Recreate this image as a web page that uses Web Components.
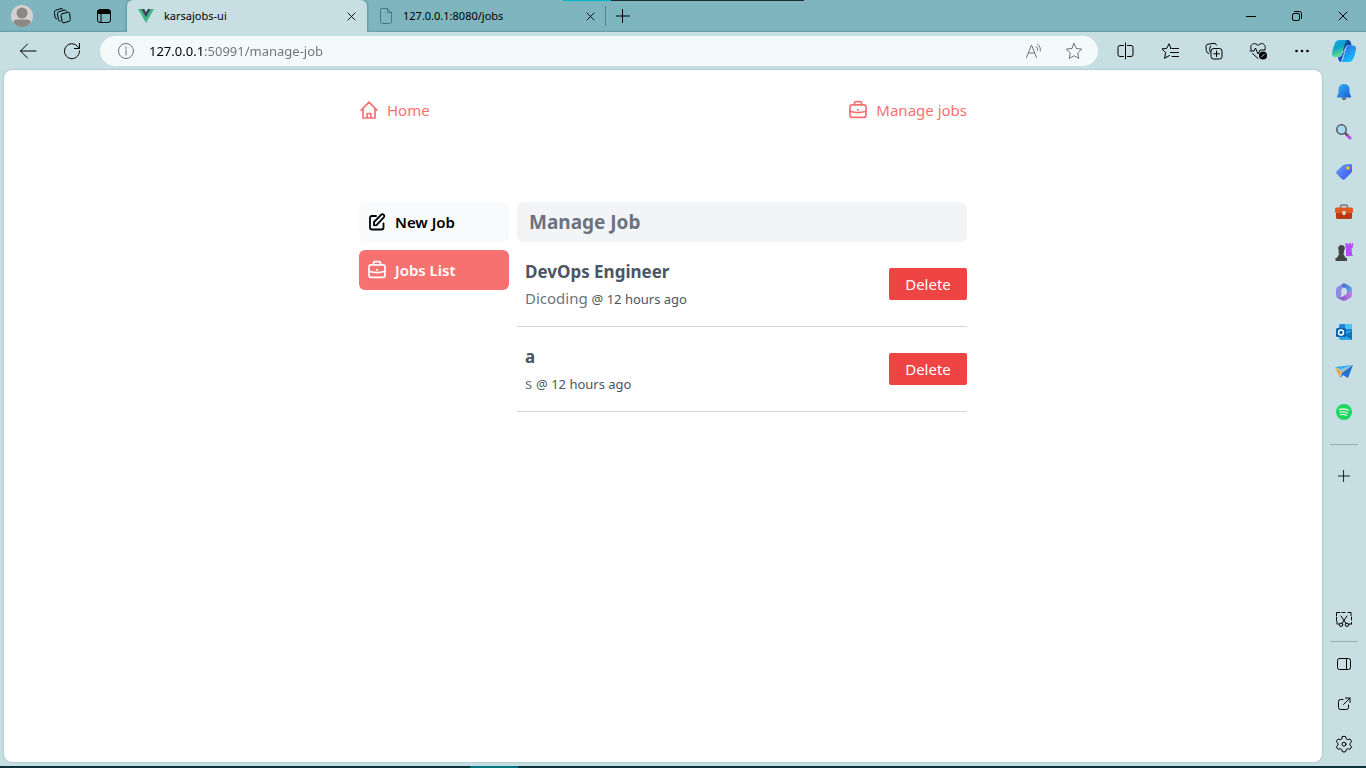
<!DOCTYPE html>
<html lang="en">
<head>
<meta charset="utf-8">
<title>karsajobs-ui</title>
<style>
html, body { margin: 0; height: 100%; }
body { font-family: "Noto Sans", "Open Sans", sans-serif; font-size: 15px; line-height: 24px; color: #000; }
</style>
</head>
<body>
<browser-window>
  <tab-strip slot="tabs">
    <browser-tab icon="vue" active>karsajobs-ui</browser-tab>
    <browser-tab icon="page">127.0.0.1:8080/jobs</browser-tab>
  </tab-strip>
  <tool-bar slot="toolbar" url="127.0.0.1:50991/manage-job"></tool-bar>
  <side-bar slot="sidebar"></side-bar>
  <jobs-page>
    <nav-link slot="nav" icon="home" href="#home">Home</nav-link>
    <nav-link slot="nav" icon="briefcase" href="#manage">Manage jobs</nav-link>
    <menu-link slot="menu" icon="edit" href="#new">New Job</menu-link>
    <menu-link slot="menu" icon="briefcase" href="#list" active>Jobs List</menu-link>
    <span slot="title">Manage Job</span>
    <job-item>DevOps Engineer<span slot="company">Dicoding</span><span slot="time">@ 12 hours ago</span></job-item>
    <job-item>a<span slot="company">s</span><span slot="time">@ 12 hours ago</span></job-item>
  </jobs-page>
</browser-window>

<script>
const define = (name, html, setup) => {
  const template = document.createElement('template');
  template.innerHTML = html;
  customElements.define(name, class extends HTMLElement {
    constructor() {
      super();
      this.attachShadow({ mode: 'open' }).append(template.content.cloneNode(true));
    }
    connectedCallback() { if (setup) setup(this, this.shadowRoot); }
  });
};

/* Each entry: view box size, then the drawing. Line icons use the text colour. */
const icons = {
  profile: [24, '<circle cx="12" cy="12" r="11" fill="#d5d1ce" stroke="none"/><circle cx="12" cy="9" r="5.5" fill="#8c8886" stroke="none"/><path d="M3.500 18.500q0-3 3-3h11q3 0 3 3Q17 23 12 23t-8.500-4.500z" fill="#8c8886" stroke="none"/>'],
  workspaces: [18, '<path d="m9.500 6.600 5.500-1.300q1.500-.2 1.700 1.200l.6 6q0 1.500-1.300 1.900l-5 1.400q-1.600.3-1.900-1.300L8 8.500q0-1.500 1.500-1.900z"/><path d="M7 14.200q-1.300.1-1.600-1.500L4.500 7q-.1-1.900 1.400-2.300l5.600-1.500q1.400-.3 2 .9M3.500 12q-1-.1-1.300-1.500L1.400 5.500q-.1-1.900 1.300-2.300L8 1.600q1.300-.3 2 .8"/>'],
  tabactions: [16, '<rect x="1.500" y="1.500" width="13" height="13" rx="2.500"/><path d="M2 3.500h12M5 5v9" /><path d="M2 2.500h12v3H2z" fill="currentColor"/>'],
  vue: [16, '<path d="M0 1h3.200L8 9.500 12.800 1H16L8 15z" fill="#41b883" stroke="none"/><path d="M3.200 1h3L8 4.200 9.800 1h3L8 9.500z" fill="#35495e" stroke="none"/>'],
  page: [18, '<path d="M4.500 1.500h6l4 4v9q0 2-2 2h-7q-2 0-2-2v-12q0-1 1-1zM10.500 1.500v4h4"/>'],
  close: [10, '<path d="m1 1 8 8M9 1 1 9" />'],
  plus: [14, '<path d="M6.500.5v13M0 7h13.500"/>'],
  minimize: [10, '<path d="M0 5.500h10"/>'],
  restore: [10, '<rect x=".5" y="2.500" width="7" height="7" rx="1.500"/><path d="M2.500.5h5q2 0 2 2v5"/>'],
  back: [18, '<path d="M17 9H1.500M8.500 2l-7 7 7 7"/>'],
  reload: [18, '<path d="M16 6.500A7.500 7.500 0 1 0 16.500 9M16.500 1.500v5h-5"/>'],
  info: [18, '<circle cx="9" cy="9" r="7.500"/><path d="M9 8v5M9 5v1.500"/>'],
  read: [18, '<path d="M1.500 15.500 6.500 3l5 12.500M3.500 11h6M11.500 4.500q1.500 1.500 1 4M12.500 2q3.500 2.500 2.700 7"/>'],
  star: [18, '<path d="m9 1.500 2.300 5 5.400.6-4 3.800 1.100 5.600L9 13.700l-4.800 2.800 1.100-5.600-4-3.800 5.400-.6z"/>'],
  split: [18, '<path d="M8.500 1v16M6.500 3.500H3q-2 0-2 2v7q0 2 2 2h3.500M10.500 3.500H14q2 0 2 2v7q0 2-2 2h-3.500"/>'],
  favorites: [18, '<path d="M9.500 6.500h.5L8 1.700l-2.200 4.600-4.800.6 3.600 3.600-1 5.800 4.900-2.800M11 6.500h6.500M9.500 10.500h8M11 14.500h6.500"/>'],
  collections: [18, '<path d="M3.800 11.500Q1.500 11 1.300 8.500L1 4.500q0-2 2-2.300l6-.9q2-.1 2.400 1.700"/><path d="M5 10q-1-4.500.500-6"/><rect x="6" y="6.500" width="11" height="10.500" rx="2.500"/><path d="M11.500 9v5.500M8.800 11.800h5.500"/>'],
  health: [18, '<path d="M2.300 8C.6 5 2.400 1.600 5.500 1.600 7.500 1.600 9 3.500 9 3.500s1.500-1.900 3.500-1.900c3.100 0 4.800 3.400 3.300 6M1 9h4l1.500-3 2.500 6 2-4h5M3.500 11.500 9 16.500"/><circle cx="14" cy="13.500" r="4" fill="currentColor" stroke="none"/><path d="m12.500 15 3-3" stroke="#c7dfe3"/>'],
  more: [16, '<g fill="currentColor" stroke="none"><circle cx="2.500" cy="8" r="1.300"/><circle cx="8" cy="8" r="1.300"/><circle cx="13.500" cy="8" r="1.300"/></g>'],
  copilot: [24, '<defs><linearGradient id="a" x2=".3" y2="1"><stop stop-color="#19a2ee"/><stop offset=".5" stop-color="#0ea5c9"/><stop offset="1" stop-color="#65db8a"/></linearGradient><linearGradient id="b" x2=".6" y2="1"><stop stop-color="#2d63e8"/><stop offset="1" stop-color="#18c0fb"/></linearGradient></defs><g stroke="none"><path d="M11 1h5q2 0 2.700 2l1 3.500h-5L11 13z" fill="#0b4f9c"/><path d="M7 1h8q-1.500 1-2.200 4L10 15q-.7 3-3.500 3H3q-3.500 0-3-4 1-6 3.200-10.500Q4.500 1 7 1z" fill="url(#a)"/><path d="M13 11 9 23q-1.500 0-2.500-2L6 18h1q2.500 0 3.200-3z" fill="#174fd0"/><path d="M17 23H9q1.700-1 2.400-4L14 9.500q.7-3 3.500-3H21q3.500 0 3 4-.8 6-3 10-1.300 2.500-4 2.500z" fill="url(#b)"/></g>'],
  bell: [16, '<defs><linearGradient id="a" x2="1" y2="1"><stop stop-color="#35b5fb"/><stop offset="1" stop-color="#185bd0"/></linearGradient></defs><g stroke="none"><path d="M5.500 13.500h5Q10 16 8 16t-2.500-2.500z" fill="#60666c"/><path d="M8 0q5.300 0 5.500 5.500V9l1.500 3v1.500H1V12l1.500-3V5.500Q2.700 0 8 0z" fill="url(#a)"/></g>'],
  search: [16, '<path d="m10 10 4 4" stroke="#b44cf0" stroke-width="3"/><path d="m9 9 2 2" stroke="#555" stroke-width="2"/><circle cx="5.500" cy="5.500" r="4.700" fill="#a8dbf2" stroke="#555" stroke-width="1.500"/>'],
  tag: [16, '<defs><linearGradient id="a" x2="1" y2="1"><stop stop-color="#67a9ff"/><stop offset="1" stop-color="#3849ea"/></linearGradient></defs><path d="M9 .5 14.500 0Q16 0 16 1.500V7q0 1-1 2l-6 6q-1.500 1.500-3 0L.8 10q-1.300-1.500 0-3L7 1.200q1-.7 2-.7z" fill="url(#a)" stroke="none"/><circle cx="12" cy="4" r="1.500" fill="#ffda60" stroke="#d99b28" stroke-width="1"/>'],
  toolbox: [18, '<path d="M5.500 5V3.500q0-1.500 1.500-1.500h4q1.500 0 1.500 1.500V5" stroke="#777" stroke-width="1.500"/><rect y="4.500" width="18" height="5.500" rx="1.500" fill="#e35a20" stroke="none"/><path d="M1 10h16v4.500q0 1.500-1.500 1.500h-13Q1 16 1 14.500z" fill="#b93b12" stroke="none"/><rect x="7.500" y="8" width="3" height="4" rx="1" fill="#dfe3e6" stroke="none"/>'],
  games: [18, '<g stroke="none"><path d="M10.500 0h2v1.500h1.500V0h2v1.500h1V0h1v4l-1.500 1.500.5 5.500 1 2h-7V5.500L10.500 4z" fill="#b34df5"/><path d="M6.500 2a3.300 3.300 0 0 1 2.300 5.700H9v2H8.500q0 3 2.500 5.300h1V18H.5v-3h1Q4 12.700 4 9.700h-.5v-2h.7A3.300 3.300 0 0 1 6.500 2z" fill="#454545"/></g>'],
  m365: [18, '<defs><linearGradient id="a" x2="1" y2="1"><stop stop-color="#3f62c8"/><stop offset="1" stop-color="#6dbcf4"/></linearGradient><linearGradient id="b" x2="1"><stop stop-color="#6b46b8"/><stop offset="1" stop-color="#c183ee"/></linearGradient></defs><g stroke="none"><path d="M9 .3 3 3.500Q1 4.700 1 7v5q0 2 1.500 3l2 .8q1.700-.5 1.700-2.800V7.500q0-1.500 1.300-2.300L11 3.500q0-2.500-2-3.200z" fill="#8f8ae6"/><path d="M8 .6q1.500-.5 3 .4l4.500 2.500Q17 4.500 17 6.500v4q-.5 1.500-2 1.500l-3-1.500v-3q0-1.500-1.300-2.200L7 3.500Q6.700 1.500 8 .6z" fill="url(#a)"/><path d="M17 7.500V12q0 2-1.500 3L11 17.300q-2 1-4 0L2 14.600q3 .7 5-.6l3.700-2.200q1.300-.8 1.300-2.300z" fill="url(#b)"/></g>'],
  outlook: [16, '<g stroke="none"><path d="M5 0h9q2 0 2 2v8H3V2q0-2 2-2z" fill="#1b86d8"/><path d="M9 0h7v5H9z" fill="#4cc4f2"/><path d="m3 8 13-1v7q0 2-2 2H5q-2 0-2-2z" fill="#28a5e5"/><path d="m16 7-7 4 7 5z" fill="#1173bd"/><rect y="4" width="10" height="9" rx="1.500" fill="#0760ab"/></g><circle cx="5" cy="8.500" r="2.500" stroke="#fff" stroke-width="1.500"/>'],
  drop: [18, '<g stroke="none"><path d="M0 4 18 2 9 8z" fill="#35a8ef"/><path d="m3 7 15-5-8 9z" fill="#8ccbf5"/><path d="m0 4 6 5 12-7L5 11v4z" fill="#eca32e"/><path d="m18 2-5 13-5-3-3 3 2-5z" fill="#2470d5"/></g>'],
  spotify: [16, '<circle cx="8" cy="8" r="8" fill="#1ed760" stroke="none"/><path d="M3.500 5.500q5-1.300 9 .8M4 8.200q4.300-1 7.500.8M4.500 10.700q3.500-.8 6 .7" stroke="#d8f2df" stroke-width="1.300"/>'],
  snip: [18, '<path d="M2 11.500V14M2 2.500h3M7 2.500h4M13 2.500h3v3M16.500 7v4M16.500 12.500V14M1.500 6v-3.500M1.500 7.500v4M3 14h1M14 14h2" stroke-dasharray="3 1"/><path d="m6 6 5 7.500M12 6l-5 7.500"/><circle cx="6" cy="14.800" r="1.700"/><circle cx="12" cy="14.800" r="1.700"/>'],
  panel: [14, '<rect x=".5" y="1.500" width="13" height="11" rx="2"/><path d="M9.500 1.500v11"/>'],
  external: [14, '<path d="M6 2.500H3.500q-2 0-2 2v6q0 2 2 2h6q2 0 2-2V8M8.500 1h4.500v4.500M13 1 6.500 7.500"/>'],
  gear: [18, '<path d="M7.400 1.500q1.600-.4 3.200 0l.6 2.300 1.500.9 2.200-.7q1.300 1.300 1.700 2.900L14.900 8.500v1.500l1.700 1.600q-.5 1.500-1.700 2.700l-2.200-.6-1.500.9-.6 2.200q-1.600.3-3.200 0l-.6-2.200-1.500-.9-2.200.6q-1.200-1.200-1.700-2.700L3.100 10V8.500L1.400 6.900Q1.800 5.300 3.100 4l2.200.7 1.500-.9z"/><circle cx="9" cy="9.200" r="2"/>'],
  home: [20, '<path d="m2.200 10.200 7.800-8 7.800 8M4 8.800V18h12V8.800M8.200 18v-4.500h3.600V18" stroke-width="1.700"/>'],
  briefcase: [20, '<rect x="2" y="4.800" width="16" height="12.500" rx="2" stroke-width="1.700"/><path d="M6.500 4.500V3q0-1.300 1.300-1.300h4.400q1.300 0 1.300 1.300v1.500M2 11.300Q10 14 18 11.300M10 9.700v.5" stroke-width="1.700"/>'],
  edit: [20, '<path d="M9 4H5Q3 4 3 6v9.500q0 2 2 2h9.500q2 0 2-2v-4M7 13.300V10l7.500-7.500q1-.9 2.300.3 1.200 1.300.2 2.400l-7.500 8z" stroke-width="1.800"/>']
};

const makeIcon = (name, size) => {
  const icon = document.createElement('app-icon');
  icon.setAttribute('name', name);
  if (size) icon.setAttribute('size', size);
  return icon;
};

define('app-icon', `
<style>
:host { display: block; flex: none; }
svg { display: block; fill: none; stroke: currentColor; stroke-linecap: round; stroke-linejoin: round; }
</style><svg aria-hidden="true"></svg>`, (el, root) => {
  const [box, art] = icons[el.getAttribute('name')];
  const svg = root.querySelector('svg');
  const size = el.getAttribute('size') || box;
  svg.setAttribute('viewBox', `0 0 ${box} ${box}`);
  svg.setAttribute('width', size);
  svg.setAttribute('height', size);
  svg.innerHTML = art;
});

define('icon-button', `
<style>
:host { display: block; flex: none; }
button { display: flex; align-items: center; justify-content: center; width: 100%; height: 100%; margin: 0; padding: 0; border: 0; background: none; color: inherit; }
</style><button type="button"></button>`, (el, root) => {
  const button = root.querySelector('button');
  button.setAttribute('aria-label', el.getAttribute('label') || el.getAttribute('icon'));
  button.replaceChildren(makeIcon(el.getAttribute('icon'), el.getAttribute('size')));
});

define('browser-window', `
<style>
:host { display: flex; flex-direction: column; min-height: 100vh; background: #c7dfe3; position: relative; }
.main { flex: 1; display: flex; }
.page { flex: 1; margin: 0 0 4px 4px; border-radius: 8px; background: #fff; box-shadow: 0 0 2px #7ea5ac; }
.taskbar { height: 2px; background: #0b3339; display: flex; }
.taskbar i { width: 48px; margin-left: 470px; background: #03737f; }
.edge { position: absolute; top: 0; left: 563px; display: flex; height: 1px; }
.edge i { width: 48px; background: #00b4c8; }
.edge b { width: 193px; background: #1f2b2d; }
</style>
<slot name="tabs"></slot>
<slot name="toolbar"></slot>
<div class="main"><div class="page"><slot></slot></div><slot name="sidebar"></slot></div>
<div class="taskbar"><i></i></div>
<div class="edge"><i></i><b></b></div>`);

define('tab-strip', `
<style>
:host { display: flex; height: 32px; background: linear-gradient(#7eb5bf 30px, #659da6 32px); }
.lead { display: flex; width: 127px; box-sizing: border-box; padding-left: 2px; }
.lead icon-button { width: 40px; }
.lead icon-button:last-child { width: 44px; }
.new { width: 34px; margin: 6px 0 6px -1px; border-left: 1px solid #4c858f; }
.controls { display: flex; margin-left: auto; }
.controls icon-button { width: 46px; }
</style>
<div class="lead"><icon-button icon="profile" label="Profile"></icon-button><icon-button icon="workspaces" label="Workspaces"></icon-button><icon-button icon="tabactions" label="Tab actions"></icon-button></div>
<slot></slot>
<icon-button class="new" icon="plus" label="New tab"></icon-button>
<div class="controls"><icon-button icon="minimize" label="Minimize"></icon-button><icon-button icon="restore" label="Restore"></icon-button><icon-button icon="close" label="Close"></icon-button></div>`);

define('browser-tab', `
<style>
:host { display: flex; align-items: center; box-sizing: border-box; width: 239px; padding-left: 10px; font-size: 11px; line-height: 16px; }
:host([active]) { width: 240px; background: #c7dfe3; border-radius: 6px 6px 0 0; box-shadow: 0 0 3px #3f7580; clip-path: inset(0 -4px 0 -4px); }
app-icon { color: #4d777e; }
span { flex: 1; margin-left: 8px; }
:host([active]) app-icon { margin-left: 1px; }
:host([active]) span { margin-left: 10px; }
icon-button { width: 32px; height: 32px; }
</style>
<span><slot></slot></span><icon-button icon="close" size="9" label="Close tab"></icon-button>`, (el, root) => {
  root.querySelector('span').before(makeIcon(el.getAttribute('icon')));
});

define('tool-bar', `
<style>
:host { display: flex; align-items: center; height: 38px; padding: 0 2px 0 6px; }
icon-button { width: 44px; height: 30px; }
.field { flex: 1; display: flex; align-items: center; height: 30px; margin: 0 6px; padding: 0 4px 0 2px; border-radius: 15px; background: #f4f9fa; color: #6d7476; }
.field icon-button { width: 40px; }
.field icon-button:first-child { width: 47px; }
input { flex: 1; min-width: 0; border: 0; padding: 0; outline: 0; font: inherit; font-size: 13px; line-height: 20px; color: transparent; background: linear-gradient(90deg, #000 56px, #6d7476 56px); -webkit-background-clip: text; background-clip: text; }
icon-button.last { width: 40px; }
</style>
<icon-button icon="back" label="Back"></icon-button><icon-button icon="reload" label="Refresh"></icon-button>
<div class="field"><icon-button icon="info" label="Site information"></icon-button><input type="text" aria-label="Address" spellcheck="false"><icon-button icon="read" label="Read aloud"></icon-button><icon-button icon="star" label="Add to favorites"></icon-button></div>
<icon-button icon="split" label="Split screen"></icon-button><icon-button icon="favorites" label="Favorites"></icon-button><icon-button icon="collections" label="Collections"></icon-button><icon-button icon="health" label="Browser essentials"></icon-button><icon-button icon="more" label="More"></icon-button><icon-button class="last" icon="copilot" label="Copilot"></icon-button>`, (el, root) => {
  root.querySelector('input').value = el.getAttribute('url');
});

define('side-bar', `
<style>
:host { display: flex; flex-direction: column; width: 44px; box-sizing: border-box; padding: 2px 0; }
icon-button { height: 40px; }
hr { width: 28px; height: 1px; margin: 12px auto 11px; border: 0; background: #97abaf; }
.bottom { margin-top: auto; }
.bottom hr { margin: 2px auto; }
</style>
<icon-button icon="bell"></icon-button><icon-button icon="search"></icon-button><icon-button icon="tag" label="shopping"></icon-button><icon-button icon="toolbox" label="tools"></icon-button><icon-button icon="games"></icon-button><icon-button icon="m365" label="Microsoft 365"></icon-button><icon-button icon="outlook"></icon-button><icon-button icon="drop"></icon-button><icon-button icon="spotify"></icon-button>
<hr><icon-button icon="plus" size="12" label="Customize"></icon-button>
<div class="bottom"><icon-button icon="snip" label="Screenshot"></icon-button><hr><icon-button icon="panel" label="Hide sidebar"></icon-button><icon-button icon="external" label="Open"></icon-button><icon-button icon="gear" label="Settings"></icon-button></div>`);

define('jobs-page', `
<style>
:host { display: block; box-sizing: border-box; max-width: 608px; margin: 0 auto; padding-top: 28px; }
nav { display: flex; justify-content: space-between; margin-bottom: 80px; }
.columns { display: grid; grid-template-columns: 150px 1fr; gap: 8px; }
.menu { display: flex; flex-direction: column; gap: 8px; }
h1 { margin: 0; padding: 6px 12px; border-radius: 6px; background: #f3f4f6; color: #6b7280; font-size: 19px; line-height: 28px; font-weight: 700; }
</style>
<nav><slot name="nav"></slot></nav>
<div class="columns"><div class="menu"><slot name="menu"></slot></div><main><h1><slot name="title"></slot></h1><slot></slot></main></div>`);

const linkSetup = (el, root) => {
  const link = root.querySelector('a');
  link.href = el.getAttribute('href');
  link.prepend(makeIcon(el.getAttribute('icon')));
};

define('nav-link', `
<style>
:host { display: block; }
a { display: flex; align-items: center; gap: 8px; color: #f87171; text-decoration: none; }
</style><a><slot></slot></a>`, linkSetup);

define('menu-link', `
<style>
:host { display: block; border-radius: 6px; background: #f9fafb; color: #000; font-weight: 600; }
:host([active]) { background: #f87171; color: #fff; }
a { display: flex; align-items: center; gap: 8px; padding: 8px; color: inherit; text-decoration: none; }
</style><a><slot></slot></a>`, linkSetup);

define('job-item', `
<style>
:host { display: flex; align-items: center; justify-content: space-between; border-bottom: 1px solid #d1d5db; padding: 16px 0; }
.text { padding-left: 8px; }
h2 { margin: 0; font-size: 17px; line-height: 28px; font-weight: 700; color: #4b5563; }
p { margin: 0; line-height: 24px; color: #6b7280; }
.time { font-size: 13px; line-height: 16px; color: #4b5563; }
button { width: 78px; height: 32px; padding: 0; border: 0; border-radius: 2px; background: #ef4444; color: #fff; font: inherit; }
</style>
<div class="text"><h2><slot></slot></h2><p><slot name="company"></slot> <span class="time"><slot name="time"></slot></span></p></div>
<button type="button">Delete</button>`);
</script>
</body>
</html>
